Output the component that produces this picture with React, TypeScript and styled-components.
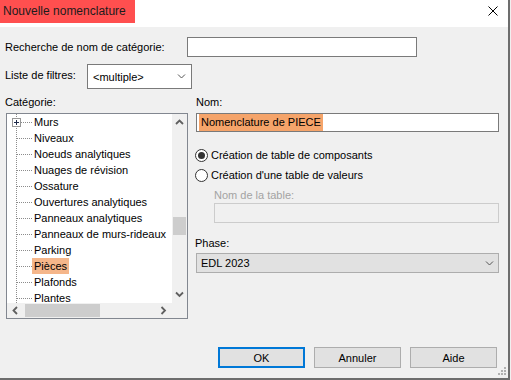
import React from "react";
import styled, { createGlobalStyle } from "styled-components";

const GlobalStyle = createGlobalStyle`
  html, body {
    margin: 0;
    padding: 0;
    background: #f0f0f0;
  }
  body {
    font-family: "Liberation Sans", Arial, sans-serif;
    font-size: 11px;
    color: #000;
  }
  * {
    box-sizing: border-box;
  }
`;

const Window = styled.div`
  width: 510px;
  height: 380px;
  display: flex;
  flex-direction: column;
  background: #f0f0f0;
  border-right: 2px solid #6d6d6d;
  border-bottom: 2px solid #6d6d6d;
`;

const TitleBar = styled.div`
  height: 27px;
  flex: none;
  display: flex;
  justify-content: space-between;
  align-items: flex-start;
  background: #fff;
`;

const Title = styled.div`
  width: 135px;
  height: 23px;
  padding-left: 3px;
  background: #ff4f4f;
  color: #1c1c1c;
  font-size: 12px;
  line-height: 23px;
  white-space: nowrap;
`;

const CloseBox = styled.div`
  padding: 6px 10px 0 0;
  display: flex;
`;

const Body = styled.div`
  flex: 1;
  display: flex;
  flex-direction: column;
  padding: 10px 0 0 5px;
`;

const FieldRow = styled.div<{ $gap?: number; $align?: string }>`
  display: flex;
  align-items: ${(p) => p.$align || "center"};
  margin-top: ${(p) => p.$gap || 0}px;
`;

const Label = styled.span<{ $w?: number; $pad?: number; $muted?: boolean; $shift?: number }>`
  display: block;
  flex: none;
  width: ${(p) => (p.$w ? `${p.$w}px` : "auto")};
  padding-top: ${(p) => p.$pad || 0}px;
  margin-left: ${(p) => p.$shift || 0}px;
  line-height: 14px;
  white-space: nowrap;
  color: ${(p) => (p.$muted ? "#a3a3a3" : "#000")};
`;

const TextBox = styled.div<{ $w?: number; $h?: number }>`
  width: ${(p) => (p.$w ? `${p.$w}px` : "100%")};
  height: ${(p) => p.$h || 20}px;
  border: 1px solid #7a7a7a;
  background: #fff;
  display: flex;
  padding-left: 2px;
`;

const Selection = styled.span`
  background: #f5a46a;
  padding: 0 2px;
  line-height: 17px;
  white-space: nowrap;
`;

const Combo = styled.div<{ $flat?: boolean; $w?: number }>`
  width: ${(p) => (p.$w ? `${p.$w}px` : "100%")};
  height: ${(p) => (p.$flat ? 20 : 25)}px;
  border: 1px solid ${(p) => (p.$flat ? "#adadad" : "#7a7a7a")};
  background: ${(p) => (p.$flat ? "#e1e1e1" : "#fff")};
  display: flex;
  align-items: center;
  justify-content: space-between;
  padding: 0 ${(p) => (p.$flat ? 4 : 5)}px;
`;

const Columns = styled.div`
  display: flex;
  margin-top: 6px;
`;

const LeftPane = styled.div`
  width: 184px;
  display: flex;
  flex-direction: column;
  gap: 4px;
`;

const RightPane = styled.div`
  width: 303px;
  margin-left: 7px;
  display: flex;
  flex-direction: column;
`;

const Tree = styled.div`
  width: 182px;
  height: 206px;
  margin-left: 1px;
  border: 1px solid #828790;
  background: #fff;
  display: grid;
  grid-template-columns: 1fr 15px;
  grid-template-rows: 1fr 15px;
  overflow: hidden;
`;

const TreeList = styled.div`
  overflow: hidden;
`;

const TreeRow = styled.div`
  height: 16px;
  display: flex;
  align-items: center;
`;

const Connector = styled.div`
  width: 25px;
  height: 16px;
  flex: none;
  display: flex;
  align-items: center;
  background-image: linear-gradient(to bottom, #8c8c8c 50%, transparent 50%);
  background-size: 1px 2px;
  background-position: 9px 0;
  background-repeat: repeat-y;
`;

const Expander = styled.div`
  width: 9px;
  height: 9px;
  margin-left: 5px;
  flex: none;
  border: 1px solid #979797;
  background: #fff;
  display: flex;
  align-items: center;
  justify-content: center;
`;

const HDots = styled.div<{ $indent: number }>`
  flex: 1;
  height: 1px;
  margin-left: ${(p) => p.$indent}px;
  background-image: linear-gradient(to right, #8c8c8c 50%, transparent 50%);
  background-size: 2px 1px;
`;

const ItemText = styled.span<{ $selected?: boolean }>`
  padding: 0 2px;
  line-height: 16px;
  white-space: nowrap;
  background: ${(p) => (p.$selected ? "#f5b68a" : "transparent")};
`;

const VScroll = styled.div`
  background: #f0f0f0;
  display: flex;
  flex-direction: column;
`;

const HScroll = styled.div`
  background: #f0f0f0;
  display: flex;
`;

const ArrowCell = styled.div<{ $horizontal?: boolean }>`
  flex: none;
  width: ${(p) => (p.$horizontal ? "17px" : "100%")};
  height: ${(p) => (p.$horizontal ? "100%" : "17px")};
  display: flex;
  align-items: center;
  justify-content: center;
`;

const Track = styled.div<{ $horizontal?: boolean }>`
  flex: 1;
  display: flex;
  flex-direction: ${(p) => (p.$horizontal ? "row" : "column")};
`;

const Thumb = styled.div<{ $horizontal?: boolean; $offset: number; $len: number }>`
  background: #cdcdcd;
  ${(p) =>
    p.$horizontal
      ? `margin: 1px 0 1px ${p.$offset}px; width: ${p.$len}px;`
      : `margin: ${p.$offset}px 1px 0 1px; height: ${p.$len}px;`}
`;

const Corner = styled.div`
  background: #f0f0f0;
`;

const RadioRow = styled.div<{ $gap?: number }>`
  height: 16px;
  margin-top: ${(p) => p.$gap || 0}px;
  margin-left: -1px;
  display: flex;
  align-items: center;
  gap: 3px;
`;

const RadioCircle = styled.span<{ $checked?: boolean }>`
  width: 13px;
  height: 13px;
  flex: none;
  border-radius: 50%;
  border: 1px solid #333;
  background: #fff;
  display: flex;
  align-items: center;
  justify-content: center;
  &::after {
    content: "";
    width: 7px;
    height: 7px;
    border-radius: 50%;
    background: ${(p) => (p.$checked ? "#333" : "transparent")};
  }
`;

const DisabledBox = styled.div`
  width: 285px;
  height: 20px;
  margin: 1px 0 0 18px;
  border: 1px solid #cccccc;
  background: #f0f0f0;
`;

const Footer = styled.div`
  margin-top: auto;
  display: flex;
  justify-content: flex-end;
  align-items: flex-end;
  padding: 0 2px 2px 0;
`;

const ButtonGroup = styled.div`
  display: flex;
  gap: 9px;
  margin-bottom: 8px;
`;

const Button = styled.button<{ $default?: boolean }>`
  width: 87px;
  height: 21px;
  padding: 0;
  font: inherit;
  color: #000;
  background: #e1e1e1;
  border: ${(p) => (p.$default ? "2px solid #0078d7" : "1px solid #adadad")};
`;

const Chevron: React.FC<{ color?: string }> = ({ color = "#555" }) => (
  <svg width="9" height="5" viewBox="0 0 9 5">
    <polyline points="1,0.5 4.5,4 8,0.5" fill="none" stroke={color} strokeWidth="1" />
  </svg>
);

const ScrollArrow: React.FC<{ dir: "up" | "down" | "left" | "right" }> = ({ dir }) => {
  const pts = {
    up: "1,5 4.5,1.5 8,5",
    down: "1,1.5 4.5,5 8,1.5",
    left: "5,1 1.5,4.5 5,8",
    right: "1.5,1 5,4.5 1.5,8",
  }[dir];
  const vertical = dir === "up" || dir === "down";
  return (
    <svg width={vertical ? 9 : 7} height={vertical ? 7 : 9} viewBox={vertical ? "0 0 9 7" : "0 0 7 9"}>
      <polyline points={pts} fill="none" stroke="#606060" strokeWidth="1.8" />
    </svg>
  );
};

const categories = [
  "Murs",
  "Niveaux",
  "Noeuds analytiques",
  "Nuages de révision",
  "Ossature",
  "Ouvertures analytiques",
  "Panneaux analytiques",
  "Panneaux de murs-rideaux",
  "Parking",
  "Pièces",
  "Plafonds",
  "Plantes",
];

const App: React.FC = () => {
  return (
    <>
      <GlobalStyle />
      <Window>
        <TitleBar>
          <Title>Nouvelle nomenclature</Title>
          <CloseBox>
            <svg width="10" height="10" viewBox="0 0 10 10">
              <path d="M0.5 0.5 L9.5 9.5 M9.5 0.5 L0.5 9.5" stroke="#000" strokeWidth="1" />
            </svg>
          </CloseBox>
        </TitleBar>
        <Body>
          <FieldRow>
            <Label $w={182}>Recherche de nom de catégorie:</Label>
            <TextBox $w={230} />
          </FieldRow>
          <FieldRow $gap={7} $align="flex-start">
            <Label $w={82} $pad={4}>Liste de filtres:</Label>
            <Combo $w={105}>
              <span>&lt;multiple&gt;</span>
              <Chevron />
            </Combo>
          </FieldRow>
          <Columns>
            <LeftPane>
              <Label>Catégorie:</Label>
              <Tree>
                <TreeList>
                  {categories.map((c, i) => (
                    <TreeRow key={c}>
                      <Connector>
                        {i === 0 && (
                          <Expander>
                            <svg width="7" height="7" viewBox="0 0 7 7">
                              <path d="M1 3.5 H6 M3.5 1 V6" stroke="#1e2a4a" strokeWidth="1" />
                            </svg>
                          </Expander>
                        )}
                        <HDots $indent={i === 0 ? 0 : 10} />
                      </Connector>
                      <ItemText $selected={c === "Pièces"}>{c}</ItemText>
                    </TreeRow>
                  ))}
                </TreeList>
                <VScroll>
                  <ArrowCell>
                    <ScrollArrow dir="up" />
                  </ArrowCell>
                  <Track>
                    <Thumb $offset={86} $len={18} />
                  </Track>
                  <ArrowCell>
                    <ScrollArrow dir="down" />
                  </ArrowCell>
                </VScroll>
                <HScroll>
                  <ArrowCell $horizontal>
                    <ScrollArrow dir="left" />
                  </ArrowCell>
                  <Track $horizontal>
                    <Thumb $horizontal $offset={1} $len={75} />
                  </Track>
                  <ArrowCell $horizontal>
                    <ScrollArrow dir="right" />
                  </ArrowCell>
                </HScroll>
                <Corner />
              </Tree>
            </LeftPane>
            <RightPane>
              <Label>Nom:</Label>
              <FieldRow $gap={4}>
                <TextBox $h={19}>
                  <Selection>Nomenclature de PIECE</Selection>
                </TextBox>
              </FieldRow>
              <RadioRow $gap={15}>
                <RadioCircle $checked />
                <span>Création de table de composants</span>
              </RadioRow>
              <RadioRow $gap={4}>
                <RadioCircle />
                <span>Création d'une table de valeurs</span>
              </RadioRow>
              <Label $muted $shift={18} style={{ marginTop: 5 }}>
                Nom de la table:
              </Label>
              <DisabledBox />
              <Label $shift={-1} style={{ marginTop: 13 }}>
                Phase:
              </Label>
              <FieldRow $gap={3}>
                <Combo $flat>
                  <span>EDL 2023</span>
                  <Chevron />
                </Combo>
              </FieldRow>
            </RightPane>
          </Columns>
          <Footer>
            <ButtonGroup>
              <Button $default>OK</Button>
              <Button>Annuler</Button>
              <Button>Aide</Button>
            </ButtonGroup>
            <svg width="9" height="9" viewBox="0 0 9 9">
              <g fill="#b0b0b0">
                <rect x="7" y="0" width="2" height="2" />
                <rect x="4" y="3" width="2" height="2" />
                <rect x="7" y="3" width="2" height="2" />
                <rect x="1" y="6" width="2" height="2" />
                <rect x="4" y="6" width="2" height="2" />
                <rect x="7" y="6" width="2" height="2" />
              </g>
            </svg>
          </Footer>
        </Body>
      </Window>
    </>
  );
};

export default App;
